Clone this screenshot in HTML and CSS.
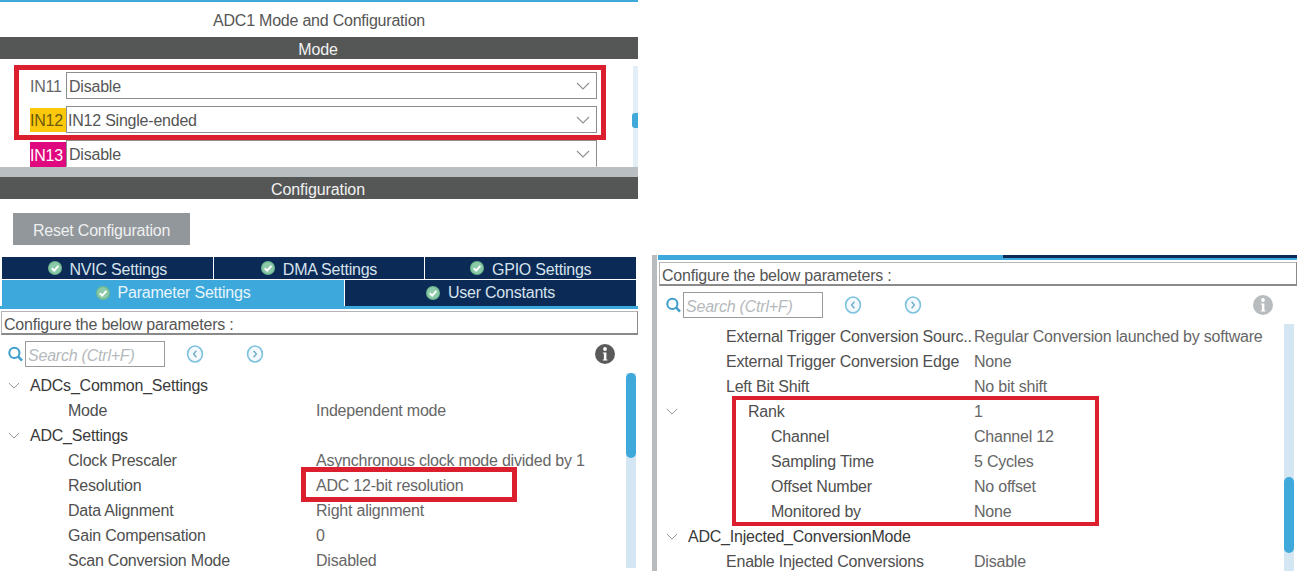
FILE: index.html
```html
<!DOCTYPE html>
<html lang="en">
<head>
<meta charset="utf-8">
<title>ADC1 Mode and Configuration</title>
<link rel="stylesheet" href="styles.css">
</head>
<body>
<svg class="defs" width="0" height="0" aria-hidden="true">
  <symbol id="check" viewBox="0 0 14 14">
    <circle cx="7" cy="7" r="7" fill="#6fb88f"/>
    <circle cx="7" cy="7" r="5.8" fill="#8ccbaa"/>
    <path d="M3.8 7.2 6.2 9.6 10.4 4.9" fill="none" stroke="#fff" stroke-width="2"/>
  </symbol>
  <symbol id="chev" viewBox="0 0 14 8">
    <path d="M1 1 7 7 13 1" fill="none" stroke="#8a8f94" stroke-width="1.1"/>
  </symbol>
  <symbol id="mag" viewBox="0 0 16 16">
    <circle cx="6.8" cy="6.8" r="5.4" fill="none" stroke="#3f9fca" stroke-width="2.2"/>
    <path d="M10.6 10.6 15 15" stroke="#3f9fca" stroke-width="2.6"/>
  </symbol>
  <symbol id="prev" viewBox="0 0 18 18">
    <ellipse cx="9" cy="9" rx="7.4" ry="8" fill="#f3f9fc" stroke="#7cc2de" stroke-width="1.6"/>
    <path d="M10.4 5.8 7.6 9 10.4 12.2" fill="none" stroke="#6aa9c4" stroke-width="1.3"/>
  </symbol>
  <symbol id="next" viewBox="0 0 18 18">
    <ellipse cx="9" cy="9" rx="7.4" ry="8" fill="#f3f9fc" stroke="#7cc2de" stroke-width="1.6"/>
    <path d="M7.6 5.8 10.4 9 7.6 12.2" fill="none" stroke="#6aa9c4" stroke-width="1.3"/>
  </symbol>
  <symbol id="info" viewBox="0 0 20 20">
    <circle cx="10" cy="10" r="10" fill="currentColor"/>
    <circle cx="10" cy="5" r="1.9" fill="#fff"/>
    <path d="M7.8 8.4H11.4V15.4H12.4V16.6H7.8V15.4H8.9V9.6H7.8Z" fill="#fff"/>
  </symbol>
</svg>

<div class="page">
  <section class="left">
    <div class="topline"></div>
    <h1 class="title">ADC1 Mode and Configuration</h1>
    <div class="bar">Mode</div>
    <div class="mode">
      <div class="mode-rows">
        <div class="mode-row">
          <span class="in">IN11</span>
          <div class="select"><span>Disable</span><svg class="select-chev"><use href="#chev"/></svg></div>
        </div>
        <div class="mode-row">
          <span class="in in-yellow">IN12</span>
          <div class="select select-tight"><span>IN12 Single-ended</span><svg class="select-chev"><use href="#chev"/></svg></div>
        </div>
        <div class="mode-row">
          <span class="in in-pink">IN13</span>
          <div class="select select-cut"><span>Disable</span><svg class="select-chev"><use href="#chev"/></svg></div>
        </div>
      </div>
      <div class="mode-scroll"><div class="mode-thumb"></div></div>
    </div>
    <div class="strip"></div>
    <div class="bar">Configuration</div>
    <div class="actions"><button class="reset" type="button">Reset Configuration</button></div>
    <div class="tabs">
      <div class="tab-row">
        <div class="tab"><svg class="tick"><use href="#check"/></svg>NVIC Settings</div>
        <div class="tab"><svg class="tick"><use href="#check"/></svg>DMA Settings</div>
        <div class="tab"><svg class="tick"><use href="#check"/></svg>GPIO Settings</div>
      </div>
      <div class="tab-row">
        <div class="tab tab-active"><svg class="tick"><use href="#check"/></svg>Parameter Settings</div>
        <div class="tab tab-user"><svg class="tick"><use href="#check"/></svg>User Constants</div>
      </div>
    </div>
    <div class="tabline"></div>

    <div class="hint">Configure the below parameters :</div>
    <div class="toolbar">
      <svg class="mag"><use href="#mag"/></svg>
      <div class="search">Search (Ctrl+F)</div>
      <svg class="nav nav-prev"><use href="#prev"/></svg>
      <svg class="nav nav-next"><use href="#next"/></svg>
      <svg class="info info-dark"><use href="#info"/></svg>
    </div>
    <div class="tree tree-left">
      <div class="rows">
        <div class="row head"><svg class="twist"><use href="#chev"/></svg><span class="name">ADCs_Common_Settings</span></div>
        <div class="row"><i></i><span class="name d1">Mode</span><span class="val">Independent mode</span></div>
        <div class="row head"><svg class="twist"><use href="#chev"/></svg><span class="name">ADC_Settings</span></div>
        <div class="row"><i></i><span class="name d1">Clock Prescaler</span><span class="val">Asynchronous clock mode divided by 1</span></div>
        <div class="row"><i></i><span class="name d1">Resolution</span><span class="val">ADC 12-bit resolution</span></div>
        <div class="row"><i></i><span class="name d1">Data Alignment</span><span class="val">Right alignment</span></div>
        <div class="row"><i></i><span class="name d1">Gain Compensation</span><span class="val">0</span></div>
        <div class="row"><i></i><span class="name d1">Scan Conversion Mode</span><span class="val">Disabled</span></div>
      </div>
      <div class="track"><div class="thumb thumb-left"></div></div>
    </div>
  </section>

  <section class="right">
    <div class="remnant"><div class="remnant-on"></div><div class="remnant-off"></div></div>
    <div class="hint">Configure the below parameters :</div>
    <div class="toolbar">
      <svg class="mag"><use href="#mag"/></svg>
      <div class="search">Search (Ctrl+F)</div>
      <svg class="nav nav-prev"><use href="#prev"/></svg>
      <svg class="nav nav-next"><use href="#next"/></svg>
      <svg class="info info-light"><use href="#info"/></svg>
    </div>
    <div class="tree tree-right">
      <div class="rows">
        <div class="row"><i></i><span class="name d1">External Trigger Conversion Sourc..</span><span class="val">Regular Conversion launched by software</span></div>
        <div class="row"><i></i><span class="name d1">External Trigger Conversion Edge</span><span class="val">None</span></div>
        <div class="row"><i></i><span class="name d1">Left Bit Shift</span><span class="val">No bit shift</span></div>
        <div class="row"><svg class="twist"><use href="#chev"/></svg><span class="name d2">Rank</span><span class="val">1</span></div>
        <div class="row"><i></i><span class="name d3">Channel</span><span class="val">Channel 12</span></div>
        <div class="row"><i></i><span class="name d3">Sampling Time</span><span class="val">5 Cycles</span></div>
        <div class="row"><i></i><span class="name d3">Offset Number</span><span class="val">No offset</span></div>
        <div class="row"><i></i><span class="name d3">Monitored by</span><span class="val">None</span></div>
        <div class="row head"><svg class="twist"><use href="#chev"/></svg><span class="name">ADC_Injected_ConversionMode</span></div>
        <div class="row"><i></i><span class="name d1">Enable Injected Conversions</span><span class="val">Disable</span></div>
      </div>
      <div class="track"><div class="thumb thumb-right"></div></div>
    </div>
  </section>

  <div class="mark mark-mode"></div>
  <div class="mark mark-res"></div>
  <div class="mark mark-rank"></div>
</div>
</body>
</html>
```

FILE: styles.css
```css
* { box-sizing: border-box; }
html, body { margin: 0; padding: 0; background: #fff; }
body { font-family: "Liberation Sans", Arial, sans-serif; font-size: 16px; letter-spacing: -0.22px; color: #4a4a4a; }
.defs { position: absolute; }
.page { position: relative; display: flex; width: 1299px; height: 585px; overflow: hidden; }

.left { width: 638px; flex: none; }
.right { width: 645px; flex: none; margin: 255px 0 0 14px; height: 316px; border-left: 5px solid #b9bcbe; padding-left: 1px; }

.topline { height: 2px; background: #3fa9d9; }
.title { margin: 0; height: 35px; font-size: 16px; font-weight: 400; line-height: 37px; text-align: center; color: #555; }
.bar { height: 22px; background: #555757; color: #f2f2f2; padding-right: 2px; text-align: center; line-height: 25px; letter-spacing: -0.1px; }

.mode { display: flex; height: 108px; overflow: hidden; }
.mode-rows { width: 597px; padding: 13px 0 0 30px; display: flex; flex-direction: column; gap: 7px; }
.mode-row { display: flex; align-items: center; height: 27px; flex: none; }
.in { width: 36px; height: 24px; line-height: 26px; color: #666; flex: none; overflow: hidden; white-space: nowrap; }
.in-yellow { background: #fcc80c; color: #6b5a10; }
.in-pink { background: #e0087f; color: #fff; height: 27px; line-height: 27px; align-self: flex-start; margin-top: 2px; }
.select { flex: 1; height: 27px; border: 1px solid #8d8d8d; background: #fff; display: flex; align-items: center; justify-content: space-between; padding: 2px 6px 0 2px; color: #555; }
.select-tight { padding-left: 1px; }
.select-cut { border-bottom-color: transparent; }
.select-chev { width: 14px; height: 8px; margin-top: -2px; }
.mode-scroll { width: 5px; height: 101px; margin: 7px 0 0 auto; background: #e3eef6; }
.mode-thumb { width: 6px; height: 15px; margin: 47px 0 0 -1px; border-radius: 3px 0 0 3px; background: #3fa9d9; }
.strip { height: 10px; background: #b9bfc1; }

.actions { padding: 14px 0 12px 13px; }
.reset { display: block; width: 177px; height: 32px; border: 0; padding: 3px 0 0; background: #92979b; color: #eef0f1; font: 16px "Liberation Sans", Arial, sans-serif; letter-spacing: -0.22px; }

.tabs { padding: 0 2px; display: flex; flex-direction: column; gap: 1px; }
.tab-row { display: flex; gap: 1px; }
.tab { flex: 1; height: 22px; background: #0b2a55; color: #d7e3ed; display: flex; align-items: center; justify-content: center; gap: 8px; padding-top: 3px; }
.tab .tick { margin-top: -3px; }
.tab-row + .tab-row .tab { height: 26px; padding-top: 0; }
.tab-row + .tab-row .tab .tick { margin-top: 0; }
.tab-row + .tab-row .tab-active { flex: none; width: 342px; background: #3da8dc; color: #e8f5fb; }
.tab-user { flex: 1; }
.tick { width: 14px; height: 14px; flex: none; }
.tabline { height: 3px; background: #3da8dc; }

.remnant { display: flex; height: 5px; }
.remnant-on { width: 345px; background: #3da8dc; }
.remnant-off { flex: 1; background: #3da8dc; border-top: 3px solid #0b2a55; }

.hint { margin: 2px 0 0 1px; width: 637px; height: 24px; border: 1px solid #b5b5b5; border-bottom: 2px solid #8a8a8a; border-right-color: #8a8a8a; padding-left: 2px; line-height: 25px; color: #555; background: #fff; }
.right .hint { width: 638px; }

.toolbar { display: flex; align-items: center; height: 26px; margin-top: 6px; }
.mag { width: 15px; height: 16px; margin-left: 8px; flex: none; }
.search { width: 140px; height: 26px; margin-left: 2px; flex: none; border: 1px solid #9a9a9a; padding-left: 2px; line-height: 27px; font-style: italic; color: #b5b9bc; }
.nav { width: 18px; height: 18px; flex: none; }
.nav-prev { margin-left: 21px; }
.nav-next { margin-left: 42px; }
.info { width: 20px; height: 20px; margin-left: 331px; flex: none; }
.info-dark { color: #5a5a5a; }
.info-light { color: #b9bcbe; }

.tree { display: flex; margin-top: 6px; overflow: hidden; }
.tree-left { height: 195px; }
.tree-right { height: 247px; }
.rows { width: 626px; flex: none; }
.row { display: grid; grid-template-columns: 30px 286px 1fr; align-items: center; height: 25px; white-space: nowrap; color: #555; }
.twist { width: 12px; height: 7px; margin-left: 8px; }
.name { color: #4f4f4f; }
.head .name { color: #3a3a3a; }
.d1 { margin-left: 38px; }
.d2 { margin-left: 60px; }
.d3 { margin-left: 83px; }
.val { color: #666; }

.track { width: 10px; flex: none; background: #d5e6f3; }
.thumb { width: 10px; border-radius: 5px; background: #3fa9dc; }
.thumb-left { height: 85px; }
.thumb-right { height: 76px; margin-top: 153px; }

.mark { position: absolute; border: 5px solid #dc1f2e; pointer-events: none; }
.mark-mode { left: 14px; top: 65px; width: 592px; height: 75px; }
.mark-res { left: 301px; top: 467px; width: 216px; height: 35px; }
.mark-rank { left: 732px; top: 396px; width: 367px; height: 130px; border-width: 4px; }
```
